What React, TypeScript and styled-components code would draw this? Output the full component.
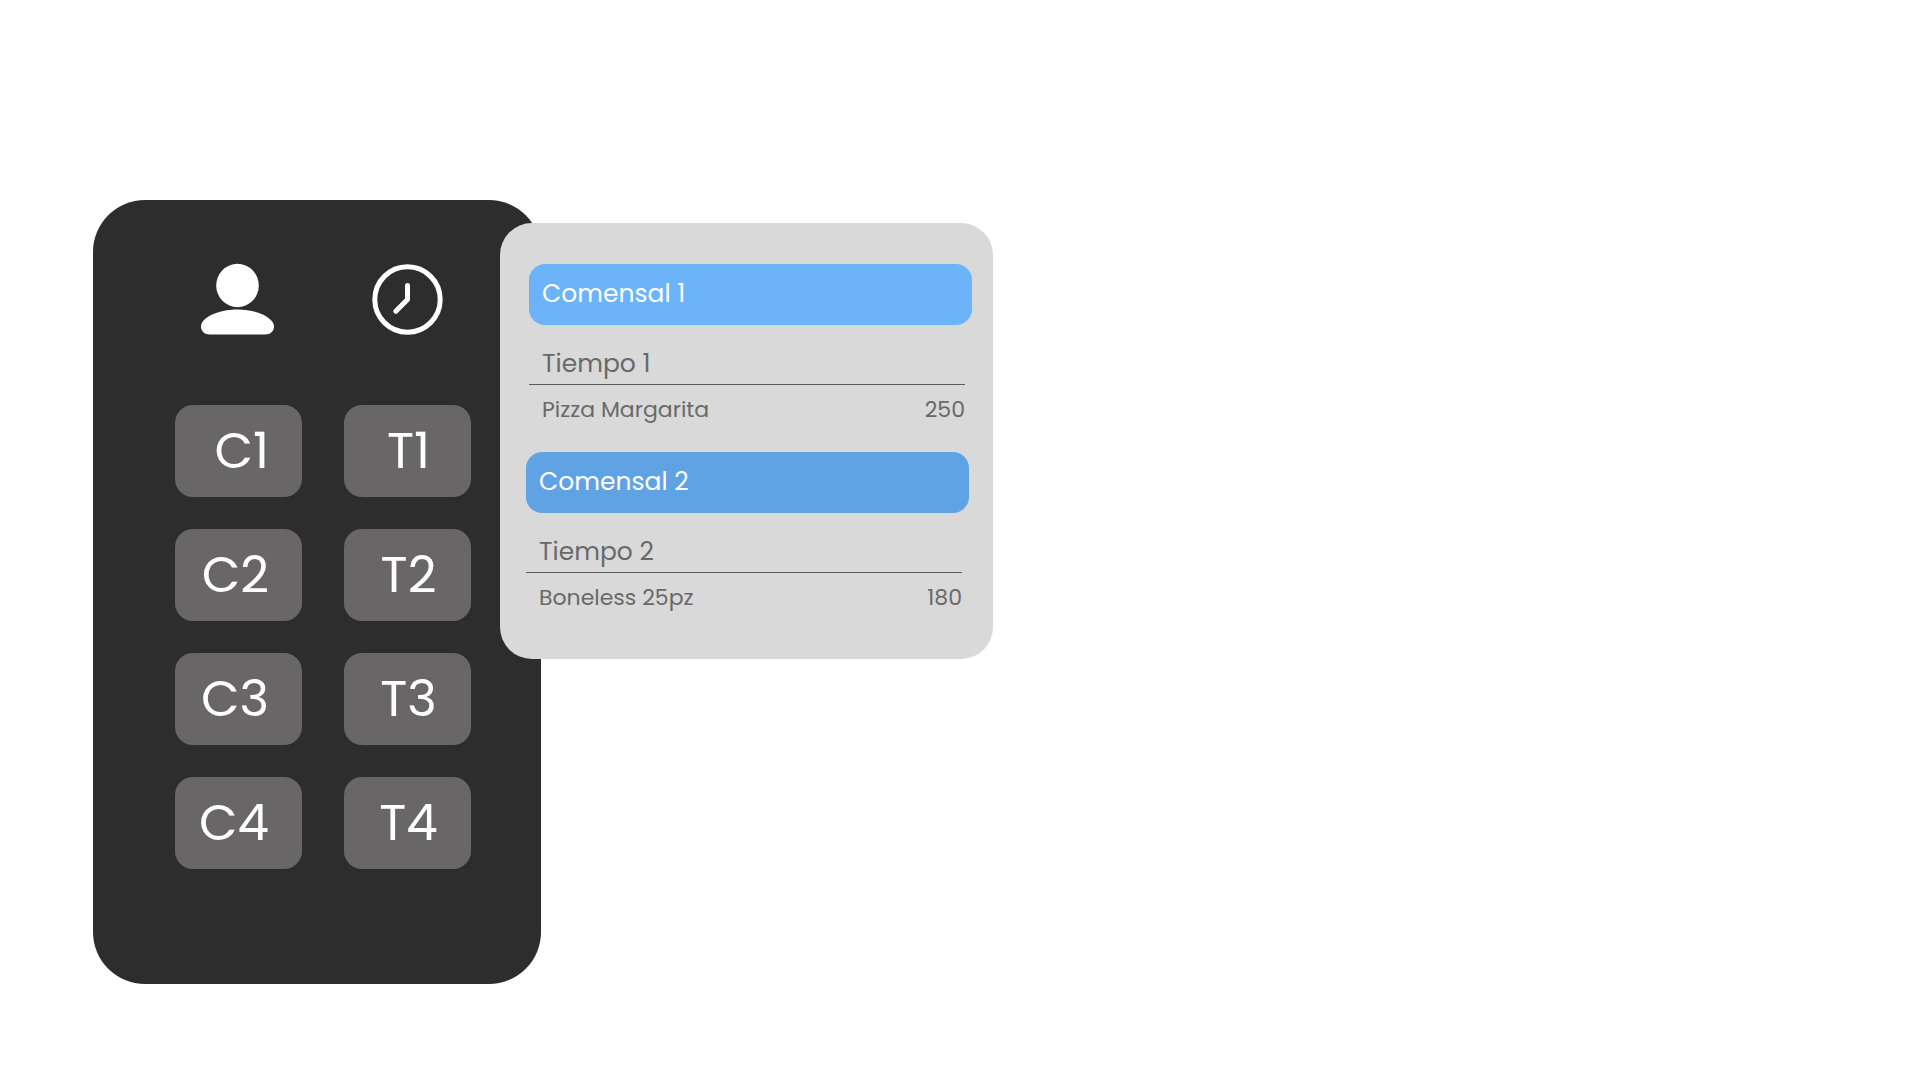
import React from "react";
import styled, { createGlobalStyle } from "styled-components";

const GlobalStyle = createGlobalStyle`
  *, *::before, *::after { box-sizing: border-box; }
  body {
    margin: 0;
    background: #ffffff;
    font-family: Poppins, Inter, "Open Sans", sans-serif;
    font-weight: 400;
  }
`;

const Page = styled.main`
  display: flex;
  align-items: flex-start;
  min-height: 100vh;
  padding: 200px 93px 96px;
`;

const Keypad = styled.nav`
  display: grid;
  grid-template-columns: 1fr 1fr;
  gap: 32px 42px;
  flex: 0 1 448px;
  padding: 64px 70px 115px 82px;
  border-radius: 52px;
  background: #2d2d2d;
`;

const IconCell = styled.div`
  display: flex;
  justify-content: center;
  margin-bottom: 39px;
`;

const Key = styled.button<{ $align: "right" | "center" }>`
  height: 92px;
  padding: ${(p) => (p.$align === "right" ? "0 33px 0 0" : "0 0 0 2px")};
  border: 0;
  border-radius: 18px;
  background: #696667;
  color: #ffffff;
  font: inherit;
  font-size: 50px;
  line-height: 60px;
  text-align: ${(p) => p.$align};
  cursor: pointer;
`;

const Order = styled.article`
  display: flex;
  flex-direction: column;
  gap: 28px;
  flex: 0 1 493px;
  margin: 23px 0 0 -41px;
  padding: 41px 21px 47px 26px;
  border-radius: 32px;
  background: #d9d9d9;
`;

const Guest = styled.section<{ $side: "start" | "end" }>`
  width: calc(100% - 3px);
  align-self: flex-${(p) => p.$side};
`;

const GuestName = styled.h2<{ $color: string }>`
  margin: 0;
  padding: 15px 13px 16px;
  border-radius: 16px;
  background: ${(p) => p.$color};
  color: #ffffff;
  font-size: 25px;
  font-weight: 400;
  line-height: 30px;
`;

const Course = styled.h3`
  margin: 24px 7px 0 0;
  padding: 0 13px 5px;
  border-bottom: 1px solid #5a5a58;
  color: #696969;
  font-size: 25px;
  font-weight: 400;
  line-height: 30px;
`;

const Items = styled.table`
  width: calc(100% - 7px);
  border-collapse: collapse;
  color: #696969;
  font-size: 22px;
  line-height: 28px;
`;

const Dish = styled.td`
  padding: 11px 0 0 13px;
`;

const Price = styled.td`
  padding: 11px 0 0;
  text-align: right;
`;

const PersonIcon = () => (
  <svg width="96" height="70" viewBox="0 0 96 70" fill="#ffffff" overflow="visible" aria-label="Comensal" role="img">
    <ellipse cx="46.5" cy="21.5" rx="21.3" ry="21.7" />
    <path d="M19 70.5C13.500 70.500 10 67 10 62.500C10 54 26 45.500 46.500 45.500S83 54 83 62.500C83 67 79.500 70.500 74 70.500Z" />
  </svg>
);

const ClockIcon = () => (
  <svg
    width="72"
    height="70"
    viewBox="0 0 72 70"
    fill="none"
    overflow="visible"
    stroke="#ffffff"
    strokeWidth="5"
    strokeLinecap="round"
    strokeLinejoin="round"
    aria-label="Tiempo"
    role="img"
  >
    <circle cx="35.5" cy="35.5" r="32.7" />
    <path d="M35.500 21.500V35.500L23.800 47.200" />
  </svg>
);

const numbers = [1, 2, 3, 4];

const guests = [
  { name: "Comensal 1", color: "#6cb3f9", side: "end", course: "Tiempo 1", dish: "Pizza Margarita", price: 250 },
  { name: "Comensal 2", color: "#60a3e4", side: "start", course: "Tiempo 2", dish: "Boneless 25pz", price: 180 },
] as const;

export default function App() {
  return (
    <>
      <GlobalStyle />
      <Page>
        <Keypad>
          <IconCell>
            <PersonIcon />
          </IconCell>
          <IconCell>
            <ClockIcon />
          </IconCell>
          {numbers.map((n) => (
            <React.Fragment key={n}>
              <Key type="button" $align="right">{`C${n}`}</Key>
              <Key type="button" $align="center">{`T${n}`}</Key>
            </React.Fragment>
          ))}
        </Keypad>
        <Order>
          {guests.map((g) => (
            <Guest key={g.name} $side={g.side}>
              <GuestName $color={g.color}>{g.name}</GuestName>
              <Course>{g.course}</Course>
              <Items>
                <tbody>
                  <tr>
                    <Dish>{g.dish}</Dish>
                    <Price>{g.price}</Price>
                  </tr>
                </tbody>
              </Items>
            </Guest>
          ))}
        </Order>
      </Page>
    </>
  );
}
